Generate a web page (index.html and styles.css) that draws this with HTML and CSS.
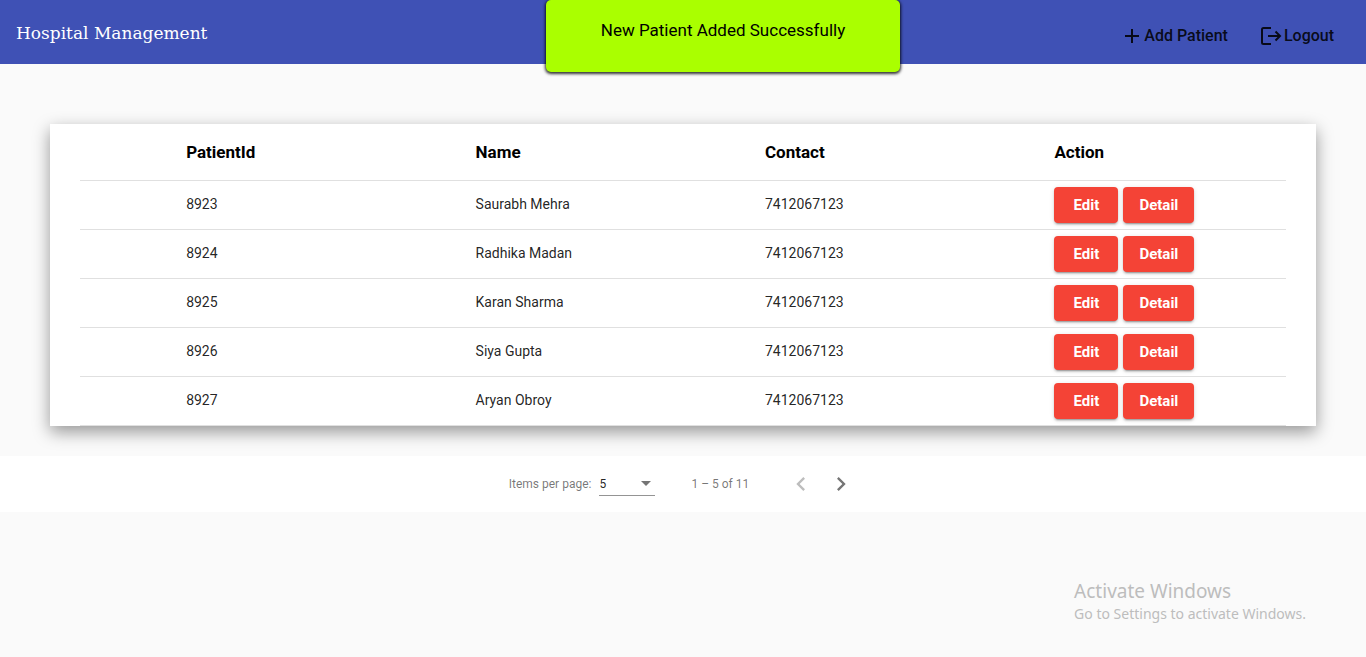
FILE: index.html
```html
<!DOCTYPE html>
<html lang="en">
<head>
<meta charset="utf-8">
<meta name="viewport" content="width=device-width, initial-scale=1">
<title>Hospital Management</title>
<link rel="stylesheet" href="styles.css">
</head>
<body>
<header class="toolbar">
  <h1 class="brand">Hospital Management</h1>
  <nav class="nav">
    <a class="nav-link nav-link-add" href="#add">
      <svg class="icon-plus" viewBox="0 0 16 16" aria-hidden="true"><path d="M8 1v14M1 8h14"/></svg>
      Add Patient
    </a>
    <a class="nav-link nav-link-logout" href="#logout">
      <svg class="icon-logout" viewBox="0 0 22 20" aria-hidden="true"><path d="M11 2H3.500Q2 2 2 3.500v13Q2 18 3.500 18H11M8 10h12M15.500 5.500L20 10l-4.500 4.500"/></svg>
      Logout
    </a>
  </nav>
</header>
<div class="toast" role="status">New Patient Added Successfully</div>
<main>
  <section class="card">
    <table class="patients">
      <colgroup><col class="col-id"><col class="col-mid"><col class="col-mid"><col></colgroup>
      <thead>
        <tr><th scope="col">PatientId</th><th scope="col">Name</th><th scope="col">Contact</th><th scope="col">Action</th></tr>
      </thead>
      <tbody>
        <tr><td>8923</td><td>Saurabh Mehra</td><td>7412067123</td><td><div class="actions"><button class="btn btn-edit" type="button">Edit</button><button class="btn" type="button">Detail</button></div></td></tr>
        <tr><td>8924</td><td>Radhika Madan</td><td>7412067123</td><td><div class="actions"><button class="btn btn-edit" type="button">Edit</button><button class="btn" type="button">Detail</button></div></td></tr>
        <tr><td>8925</td><td>Karan Sharma</td><td>7412067123</td><td><div class="actions"><button class="btn btn-edit" type="button">Edit</button><button class="btn" type="button">Detail</button></div></td></tr>
        <tr><td>8926</td><td>Siya Gupta</td><td>7412067123</td><td><div class="actions"><button class="btn btn-edit" type="button">Edit</button><button class="btn" type="button">Detail</button></div></td></tr>
        <tr><td>8927</td><td>Aryan Obroy</td><td>7412067123</td><td><div class="actions"><button class="btn btn-edit" type="button">Edit</button><button class="btn" type="button">Detail</button></div></td></tr>
      </tbody>
    </table>
  </section>
  <div class="paginator">
    <label for="page-size">Items per page:</label>
    <div class="select">
      <select id="page-size"><option>5</option><option>10</option><option>20</option></select>
      <svg class="caret" viewBox="0 0 10 5" aria-hidden="true"><path d="M0 0h10L5 5z"/></svg>
    </div>
    <span class="range">1 – 5 of 11</span>
    <button class="page-btn" type="button" aria-label="Previous page" disabled>
      <svg viewBox="0 0 24 24" aria-hidden="true"><path d="M15.41 7.41L14 6l-6 6 6 6 1.41-1.41L10.83 12z"/></svg>
    </button>
    <button class="page-btn" type="button" aria-label="Next page">
      <svg viewBox="0 0 24 24" aria-hidden="true"><path d="M10 6L8.59 7.41 13.17 12l-4.58 4.59L10 18l6-6z"/></svg>
    </button>
  </div>
</main>
<aside class="watermark">
  <p class="watermark-title">Activate Windows</p>
  <p class="watermark-text">Go to Settings to activate Windows.</p>
</aside>
</body>
</html>
```
FILE: styles.css
```css
* { box-sizing: border-box; }

body {
  margin: 0;
  background: #fafafa;
  color: rgba(0, 0, 0, 0.87);
  font: 14px/20px Roboto, sans-serif;
}

.toolbar {
  display: flex;
  align-items: center;
  justify-content: space-between;
  height: 64px;
  padding: 0 32px 0 16px;
  background: #3f51b5;
}

.brand {
  margin: 0;
  padding-top: 2px;
  color: #fff;
  font: 400 17px/32px "DejaVu Serif", serif;
}

.nav {
  display: flex;
  gap: 32px;
  padding-top: 7px;
}

.nav-link {
  display: flex;
  align-items: center;
  color: rgba(0, 0, 0, 0.87);
  font-size: 16px;
  font-weight: 500;
  line-height: 24px;
  text-decoration: none;
}

.nav-link-add { gap: 4px; }
.nav-link-logout { gap: 2px; }

.nav-link svg {
  fill: none;
  stroke: currentColor;
  stroke-width: 2;
}

.icon-plus { width: 16px; height: 16px; }
.icon-logout { width: 22px; height: 20px; }

.toast {
  position: absolute;
  top: 0;
  left: calc(50% - 137px);
  width: 354px;
  height: 72px;
  padding-top: 18px;
  border-radius: 5px;
  background: #af0;
  box-shadow: 0 1px 3px 1px rgba(0, 0, 0, 0.8);
  color: #000;
  font-size: 17px;
  line-height: 24px;
  text-align: center;
}

.card {
  margin: 60px 50px 30px;
  padding: 0 30px;
  background: #fff;
  box-shadow: 0 6px 16px rgba(0, 0, 0, 0.4);
}

.patients {
  width: 100%;
  border-collapse: separate;
  border-spacing: 0;
  table-layout: fixed;
}

.col-id { width: 32.8%; }
.col-mid { width: 24%; }

.patients th,
.patients td {
  padding: 0;
  border-bottom: 1px solid #e0e0e0;
  text-align: left;
}

.patients th {
  height: 57px;
  color: #000;
  font-size: 17px;
  font-weight: 700;
}

.patients td {
  height: 49px;
  padding-bottom: 2px;
}

.patients th:first-child,
.patients td:first-child { padding-left: 8.8%; }

.actions {
  display: flex;
  gap: 5px;
  padding-top: 2px;
}

.btn {
  height: 36px;
  padding: 0 16px;
  border: 0;
  border-radius: 4px;
  background: #f44336;
  box-shadow: 0 3px 1px -2px rgba(0, 0, 0, 0.2), 0 2px 2px rgba(0, 0, 0, 0.14), 0 1px 5px rgba(0, 0, 0, 0.12);
  color: #fff;
  font: 700 15px/36px Roboto, sans-serif;
}

.btn-edit { width: 64px; }

.paginator {
  display: flex;
  align-items: center;
  justify-content: center;
  height: 56px;
  padding-left: 4px;
  background: #fff;
  color: rgba(0, 0, 0, 0.54);
  font-size: 12px;
}

.select {
  display: grid;
  align-items: center;
  width: 56px;
  height: 24px;
  margin: 0 36px 0 8px;
  border-bottom: 1px solid #949494;
}

.select select {
  grid-area: 1 / 1;
  width: 100%;
  padding: 0;
  border: 0;
  appearance: none;
  background: transparent;
  color: rgba(0, 0, 0, 0.87);
  font: 12px/20px Roboto, sans-serif;
}

.caret {
  grid-area: 1 / 1;
  justify-self: end;
  width: 10px;
  height: 5px;
  margin-right: 4px;
  fill: #757575;
  pointer-events: none;
}

.range { margin-right: 32px; }

.page-btn {
  display: grid;
  place-items: center;
  width: 40px;
  height: 40px;
  padding: 0;
  border: 0;
  background: transparent;
}

.page-btn svg {
  width: 28px;
  height: 28px;
  fill: #757575;
}

.page-btn:disabled svg { fill: #bdbdbd; }

.watermark {
  position: absolute;
  right: 60px;
  bottom: 33px;
  color: #bdbdbd;
  font-family: "Noto Sans", sans-serif;
}

.watermark p { margin: 0; }
.watermark-title { font-size: 19px; line-height: 25px; }
.watermark-text { font-size: 14px; line-height: 20px; }
```
